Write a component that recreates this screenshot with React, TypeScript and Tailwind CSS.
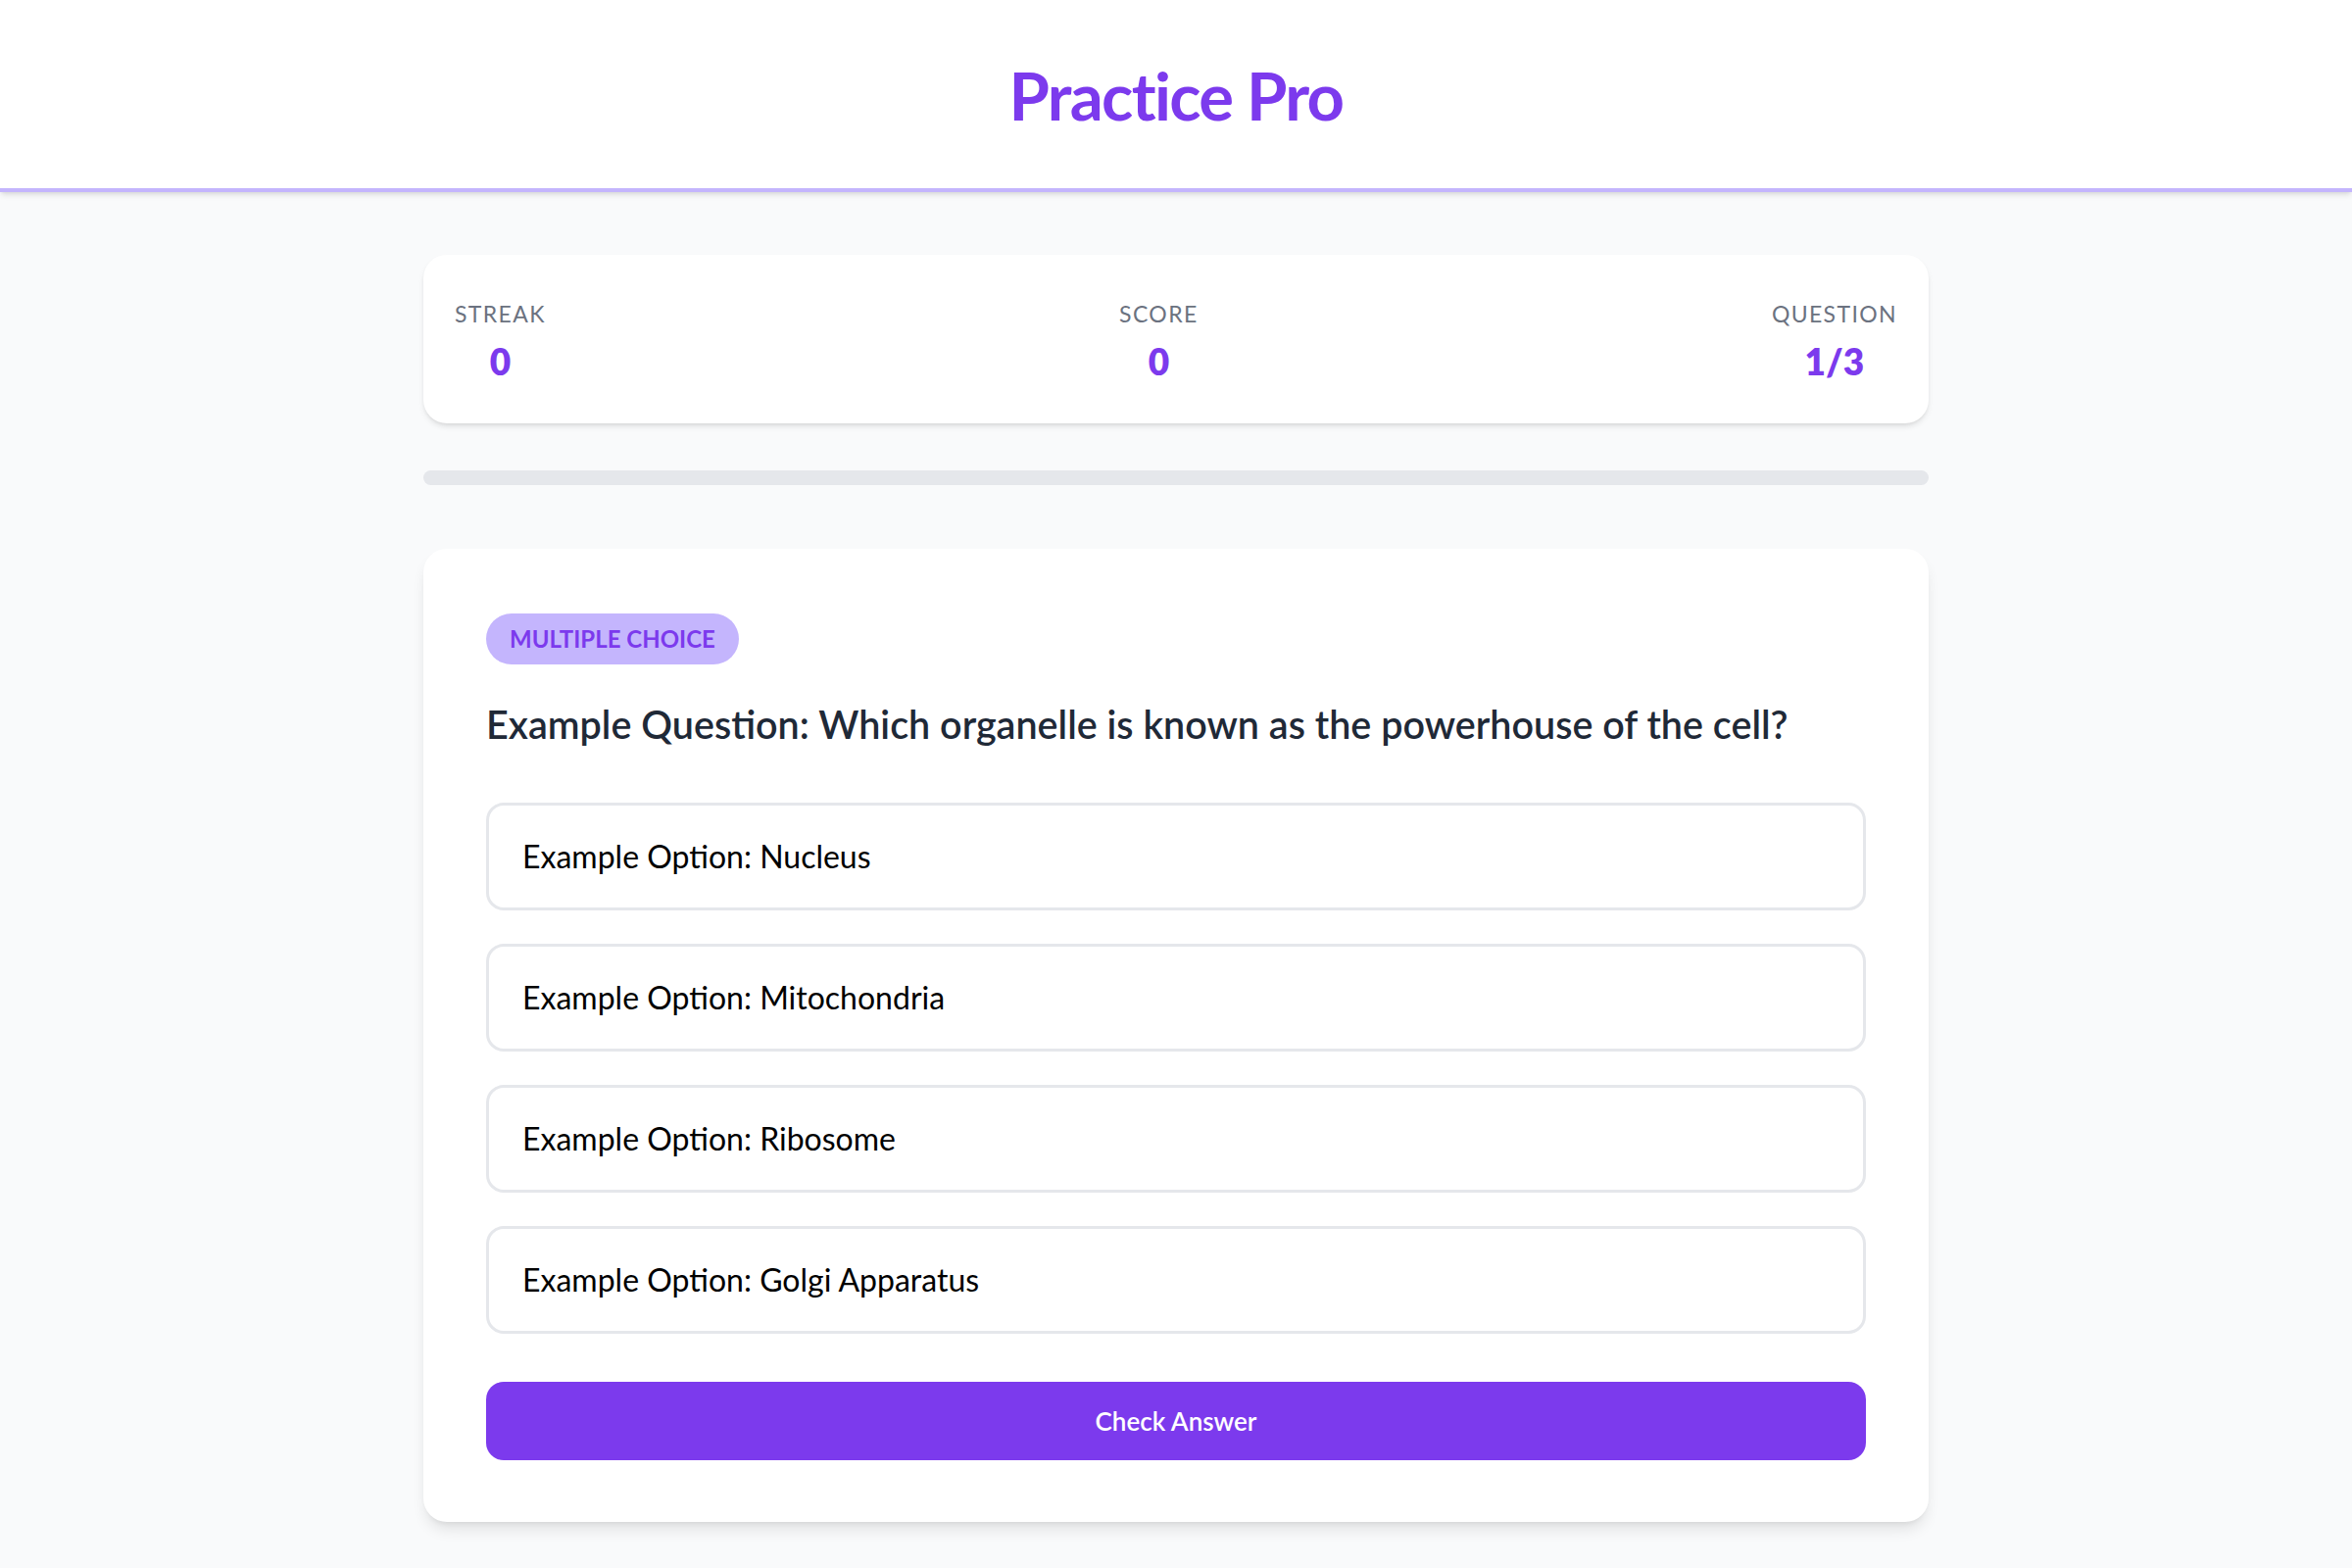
import { useState } from "react";

// Oefenscherm: kop, stand (streak/score/vraag), voortgang en de vraagkaart.
const opties = [
  "Example Option: Nucleus",
  "Example Option: Mitochondria",
  "Example Option: Ribosome",
  "Example Option: Golgi Apparatus",
];

function Stat({ label, waarde }: { label: string; waarde: string }) {
  return (
    <div className="flex flex-col items-center">
      <span className="text-[23px] leading-[33px] tracking-[0.06em] text-[#6b7280]">
        {label}
      </span>
      <span className="mt-[8px] text-[37px] font-extrabold leading-[48px] text-[#7c3aed]">
        {waarde}
      </span>
    </div>
  );
}

export default function App() {
  const [gekozen, setGekozen] = useState<number | null>(null);

  return (
    <div
      className="min-h-screen bg-[#f9fafb]"
      style={{ fontFamily: "Lato, 'Noto Sans', sans-serif" }}
    >
      <header className="flex h-[196px] items-center justify-center border-b-4 border-[#c4b5fd] bg-white shadow-md">
        <h1 className="mt-[2px] text-[67px] font-bold tracking-tight text-[#7c3aed]">
          Practice Pro
        </h1>
      </header>

      <main className="mx-auto w-[1536px] pt-[64px]">
        <div className="flex justify-between rounded-[24px] bg-white px-[32px] pb-[39px] pt-[44px] shadow-md">
          <Stat label="STREAK" waarde="0" />
          <Stat label="SCORE" waarde="0" />
          <Stat label="QUESTION" waarde="1/3" />
        </div>

        <div className="mt-[48px] h-[15px] w-full rounded-full bg-[#e5e7eb]">
          <div className="h-full w-0 rounded-full bg-[#7c3aed]" />
        </div>

        <div className="mt-[65px] rounded-[24px] bg-white px-[64px] pb-[63px] pt-[66px] shadow-lg">
          <span className="inline-flex h-[52px] items-center rounded-full bg-[#c4b5fd] px-[24px] text-[24px] font-bold text-[#7c3aed]">
            MULTIPLE CHOICE
          </span>
          <h2 className="mt-[33px] text-[39.5px] font-semibold leading-[56px] text-[#1f2937]">
            Example Question: Which organelle is known as the powerhouse of the
            cell?
          </h2>

          <div className="mt-[52px] flex flex-col gap-[34px]">
            {opties.map((optie, i) => (
              <button
                key={optie}
                type="button"
                onClick={() => setGekozen(i)}
                className={`flex h-[110px] items-center rounded-[18px] border-[3px] bg-white px-[34px] text-left text-[32px] text-black ${
                  gekozen === i ? "border-[#7c3aed]" : "border-[#e5e7eb]"
                }`}
              >
                {optie}
              </button>
            ))}
          </div>

          <button
            type="button"
            className="mt-[49px] flex h-[80px] w-full items-center justify-center rounded-[18px] bg-[#7c3aed] text-[26px] font-semibold text-white"
          >
            Check Answer
          </button>
        </div>
      </main>
    </div>
  );
}
